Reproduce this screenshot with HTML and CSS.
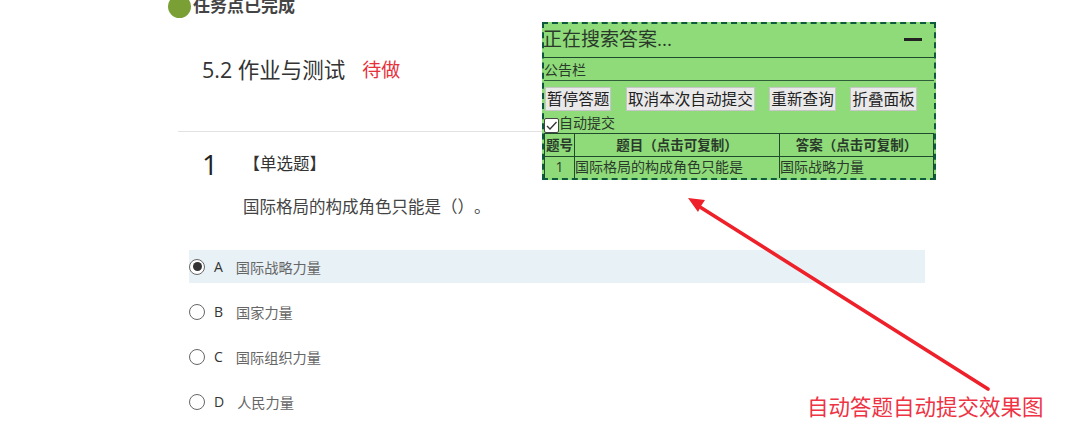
FILE: index.html
```html
<!DOCTYPE html>
<html lang="zh-CN">
<head>
<meta charset="utf-8">
<title>任务点已完成</title>
<link rel="stylesheet" href="styles.css">
</head>
<body>
<div class="page">
  <div class="status"><span class="dot"></span><span class="status-text">任务点已完成</span></div>
  <div class="heading"><h1 class="title">5.2 作业与测试</h1><span class="todo">待做</span></div>
  <div class="rule"></div>
  <div class="question-head"><span class="num">1</span><span class="type">【单选题】</span></div>
  <p class="stem">国际格局的构成角色只能是（）。</p>
  <ul class="options">
    <li class="option selected"><span class="radio checked"></span><span class="letter">A</span><span class="opt-text">国际战略力量</span></li>
    <li class="option"><span class="radio"></span><span class="letter">B</span><span class="opt-text">国家力量</span></li>
    <li class="option"><span class="radio"></span><span class="letter">C</span><span class="opt-text">国际组织力量</span></li>
    <li class="option"><span class="radio"></span><span class="letter">D</span><span class="opt-text">人民力量</span></li>
  </ul>
</div>

<section class="panel">
  <div class="panel-title"><span class="panel-heading">正在搜索答案...</span><span class="minus"></span></div>
  <div class="notice">公告栏</div>
  <div class="actions">
    <button class="btn">暂停答题</button>
    <button class="btn">取消本次自动提交</button>
    <button class="btn">重新查询</button>
    <button class="btn">折叠面板</button>
  </div>
  <label class="auto"><span class="check"><svg viewBox="0 0 15 15" width="15" height="15"><path d="M3 8 L6 11 L12.5 4" fill="none" stroke="#333" stroke-width="1.3"/></svg></span>自动提交</label>
  <table class="answers">
    <thead><tr><th class="c1">题号</th><th class="c2">题目（点击可复制）</th><th class="c3">答案（点击可复制）</th></tr></thead>
    <tbody><tr><td class="center">1</td><td>国际格局的构成角色只能是</td><td>国际战略力量</td></tr></tbody>
  </table>
</section>

<svg class="arrow" width="1080" height="426" viewBox="0 0 1080 426">
  <path d="M988 389 L700 207" stroke="#ee2029" stroke-width="3.6" stroke-linecap="round" fill="none"/>
  <path d="M688 198 L705 200 L701 206 L698 212 Z" fill="#ee2029"/>
</svg>
<div class="caption">自动答题自动提交效果图</div>
</body>
</html>
```

FILE: styles.css
```css
* { box-sizing: border-box; }
html, body { margin: 0; padding: 0; background: #fff; }
body {
  width: 1080px; height: 426px; overflow: hidden; position: relative;
  font-family: "Open Sans", "Noto Sans CJK SC", sans-serif; color: #333;
  text-spacing-trim: space-all;
}
.page { display: flex; flex-direction: column; }

.status { display: flex; align-items: center; height: 12px; margin-left: 168px; gap: 2px; }
.dot { width: 23px; height: 23px; border-radius: 50%; background: #7a9f35; flex: none; }
.status-text { font-size: 17px; font-weight: 700; color: #444; line-height: 12px; white-space: nowrap; }

.heading { display: flex; align-items: center; margin: 43px 0 0 202px; height: 30px; }
.title { margin: 0; font-size: 21.5px; font-weight: 400; color: #333; line-height: 30px; }
.todo { margin-left: 17px; font-size: 19px; color: #e8303a; line-height: 30px; }

.rule { height: 1px; margin: 46px 0 0 178px; width: 758px; background: #e2e2e2; }

.question-head { display: flex; align-items: center; margin: 15px 0 0 202px; height: 34px; }
.num { font-size: 28px; line-height: 34px; color: #222; width: 41.5px; }
.type { font-size: 16.5px; line-height: 34px; color: #333; }

.stem { margin: 12px 0 0 243px; font-size: 16.5px; line-height: 28px; color: #444; }

.options { list-style: none; margin: 29px 0 0 189px; padding: 0; width: 736px; }
.option { display: flex; align-items: center; height: 33px; margin-bottom: 12px; }
.selected { background: #e8f1f6; }
.radio { width: 16px; height: 16px; border-radius: 50%; border: 1px solid #666; background: #fff; flex: none; position: relative; }
.radio.checked::after { content: ""; position: absolute; left: 2.5px; top: 2.5px; width: 9px; height: 9px; border-radius: 50%; background: #333; }
.letter { font-size: 14px; margin: 0 13px 0 9px; color: #333; }
.opt-text { font-size: 14.2px; color: #666; }

.panel {
  position: absolute; left: 542px; top: 22px; width: 394px; height: 158px;
  background: #8fdb7a; border: 2px dashed #0d5a3c; color: #2a3a2a; overflow: hidden;
}
.panel-title { display: flex; justify-content: space-between; align-items: center; height: 34px; border-bottom: 1px solid #1f4a2c; font-size: 19px; padding: 0 12px 6px 0; white-space: nowrap; }
.panel-heading { margin-left: -1px; }
.minus { width: 18px; height: 3px; background: #222; margin-top: 3px; }
.notice { height: 23px; border-bottom: 1px solid #2f5f38; font-size: 14px; line-height: 23px; }
.actions { display: flex; gap: 14.6px; padding: 6px 0 0 1px; height: 31px; }
.btn { height: 24px; padding: 0 1px; font: 400 15.6px/22px "Open Sans", "Noto Sans CJK SC", sans-serif; color: #222; background: #e9e9e9; border: 1px solid #c6c6c6; white-space: nowrap; }
.auto { display: flex; align-items: flex-end; height: 21px; font-size: 14px; line-height: 20px; }
.check { width: 15px; height: 15px; background: #fff; border: 1px solid #444; border-radius: 2px; display: block; flex: none; overflow: hidden; }
.check svg { display: block; margin: -1px; }

.answers { border-collapse: collapse; width: 390px; table-layout: fixed; font-size: 14px; border: 1px solid #1f4a2c; }
.answers th, .answers td { border: 1px solid #1f4a2c; padding: 0; height: 22.5px; line-height: 20px; white-space: nowrap; overflow: hidden; }
.answers th { font-size: 13.5px; font-weight: 700; }
.answers .c1 { width: 30px; }
.answers .c2 { width: 205px; }
.center { text-align: center; }

.arrow { position: absolute; left: 0; top: 0; pointer-events: none; }
.caption { position: absolute; left: 807px; top: 391px; font-size: 21.5px; line-height: 32px; color: #ee3344; white-space: nowrap; }
```
